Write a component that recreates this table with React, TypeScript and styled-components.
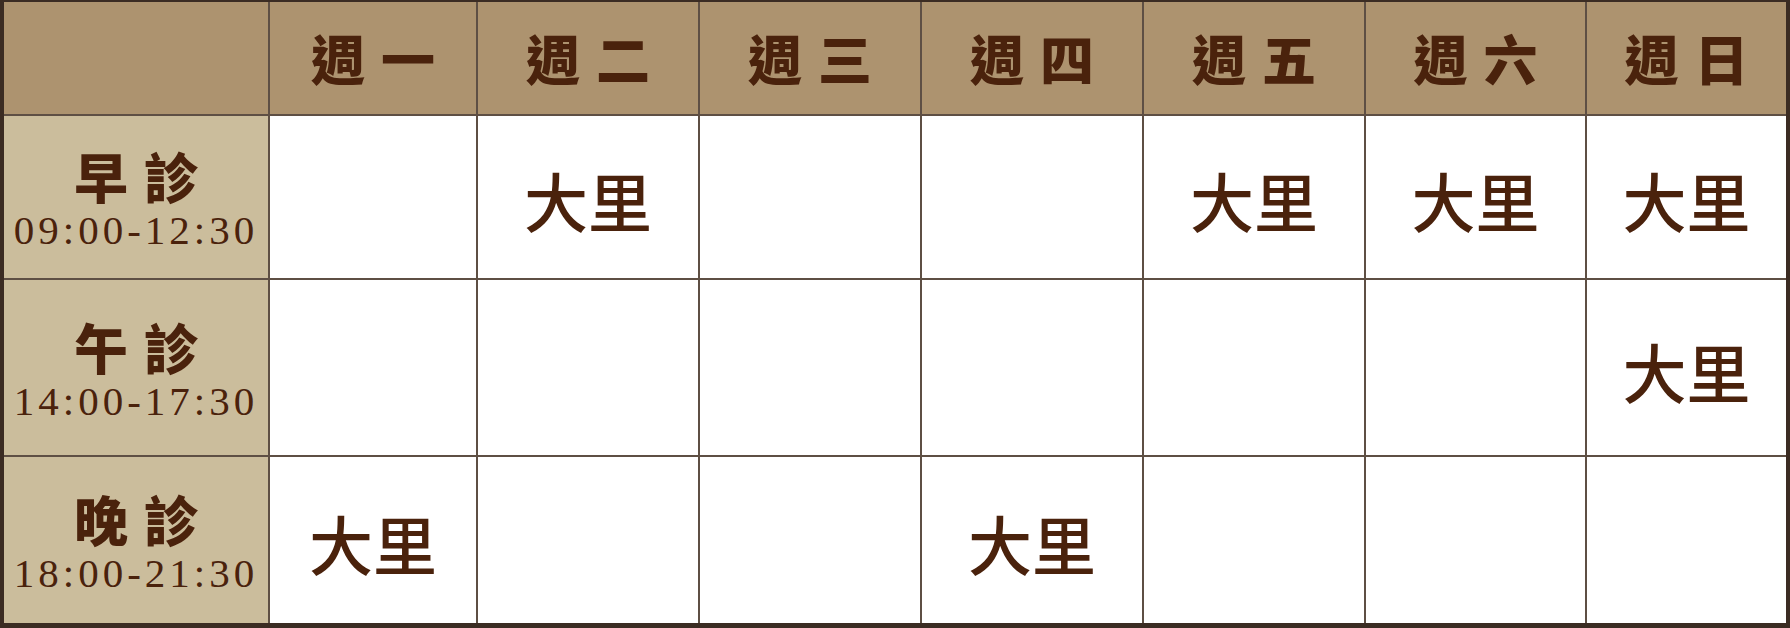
import * as React from "react";
import styled, { createGlobalStyle } from "styled-components";

const GlobalStyle = createGlobalStyle`
	html, body {
		margin: 0;
		padding: 0;
		background: #ffffff;
	}
`;

type Slot = {
	name: string;
	time: string;
	days: boolean[];
};

const days = ["週一", "週二", "週三", "週四", "週五", "週六", "週日"];

const slots: Slot[] = [
	{ name: "早診", time: "09:00-12:30", days: [false, true, false, false, true, true, true] },
	{ name: "午診", time: "14:00-17:30", days: [false, false, false, false, false, false, true] },
	{ name: "晚診", time: "18:00-21:30", days: [true, false, false, true, false, false, false] },
];

const App: React.FC = (): JSX.Element => {
	return (
		<>
			<GlobalStyle />
			<Schedule>
				<HeaderCell />
				{days.map((d) => (
					<HeaderCell key={d}>
						<DayLabel>{d}</DayLabel>
					</HeaderCell>
				))}
				{slots.map((slot) => (
					<React.Fragment key={slot.name}>
						<SlotCell>
							<SlotName>{slot.name}</SlotName>
							<SlotTime>{slot.time}</SlotTime>
						</SlotCell>
						{slot.days.map((open, i) => (
							<ClinicCell key={i}>{open ? "大里" : ""}</ClinicCell>
						))}
					</React.Fragment>
				))}
			</Schedule>
		</>
	);
};

export default App;

const Schedule = styled.div`
	display: grid;
	grid-template-columns: 264px 206px 220px 220px 220px 220px 219px 199px;
	grid-template-rows: 112px 162px 175px 166px;
	gap: 2px;
	width: 1790px;
	height: 628px;
	box-sizing: border-box;
	border-style: solid;
	border-color: #3b2c23;
	border-width: 2px 4px 5px 4px;
	background: #5e4f44;
`;

const HeaderCell = styled.div`
	background: #ad936f;
	display: flex;
	align-items: center;
	justify-content: center;
`;

const DayLabel = styled.span`
	font-family: "Noto Sans CJK TC", "Noto Sans CJK SC", sans-serif;
	font-weight: 900;
	font-size: 54px;
	letter-spacing: 16px;
	padding-left: 16px;
	color: #4a220c;
	line-height: 1;
`;

const SlotCell = styled.div`
	background: #cbbd9c;
	display: flex;
	flex-direction: column;
	align-items: center;
	justify-content: center;
	color: #4a220c;
`;

const SlotName = styled.div`
	font-family: "Noto Sans CJK TC", "Noto Sans CJK SC", sans-serif;
	font-weight: 900;
	font-size: 54px;
	letter-spacing: 16px;
	padding-left: 16px;
	line-height: 66px;
`;

const SlotTime = styled.div`
	font-family: "Liberation Serif", serif;
	font-size: 41px;
	letter-spacing: 4px;
	line-height: 42px;
`;

const ClinicCell = styled.div`
	background: #ffffff;
	display: flex;
	align-items: center;
	justify-content: center;
	font-family: "Noto Sans CJK TC", "Noto Sans CJK SC", sans-serif;
	font-weight: 500;
	font-size: 64px;
	color: #4a220c;
	line-height: 1;
	padding-top: 4px;
`;
